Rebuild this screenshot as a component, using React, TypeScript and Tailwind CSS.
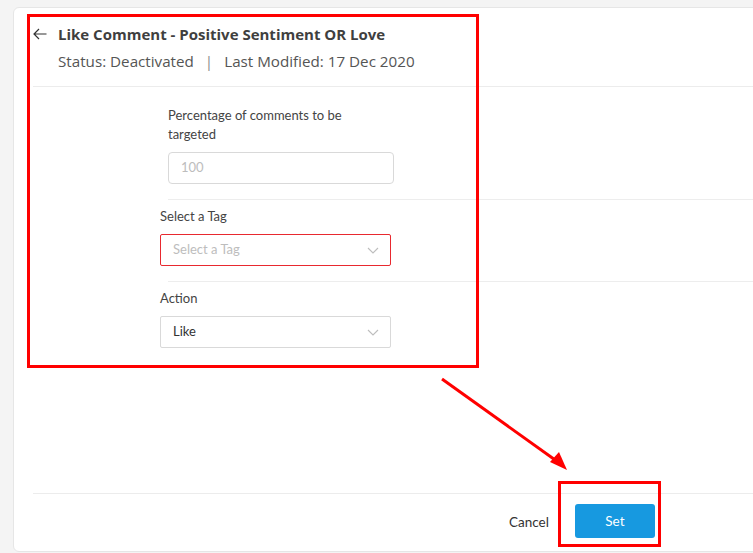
import { ReactNode } from "react";

function Chevron() {
  return (
    <svg width="12" height="7" viewBox="0 0 12 7" fill="none" className="shrink-0">
      <path d="M1 1l5 5 5-5" stroke="#bdbdbd" strokeWidth="1.1" />
    </svg>
  );
}

function Select({ value, placeholder, error }: { value?: string; placeholder: string; error?: boolean }) {
  return (
    <div
      className={`flex h-[32px] w-[231px] items-center justify-between rounded-[2px] border pl-[12px] pr-[11px] text-[13px] ${
        error ? "border-[#e8292f]" : "border-[#d9d9d9]"
      }`}
    >
      <span className={value ? "text-[#333]" : "text-[#bdbdbd]"}>{value ?? placeholder}</span>
      <Chevron />
    </div>
  );
}

function Section({ children, className }: { children: ReactNode; className?: string }) {
  return <div className={className}>{children}</div>;
}

export default function App() {
  return (
    <div
      className="relative h-[553px] w-full overflow-hidden bg-[#f4f4f4] pl-[13px] pt-[7px]"
      style={{ fontFamily: "Lato, 'Open Sans', sans-serif" }}
    >
      <div className="flex h-[545px] w-[800px] flex-col rounded-[6px] border border-[#e6e6e6] bg-white">
        {/* header */}
        <div className="ml-[19px] border-b border-[#ececec] pt-[16px] pb-[15px] font-['Open_Sans',sans-serif]">
          <div className="flex items-center gap-[11px]">
            <svg width="14" height="12" viewBox="0 0 14 12" fill="none">
              <path d="M13.5 6H1M6 1L1 6l5 5" stroke="#333" strokeWidth="1.2" />
            </svg>
            <h1 className="text-[15px] leading-[20px] font-bold text-[#3f3f3f]">
              Like Comment - Positive Sentiment OR Love
            </h1>
          </div>
          <p className="mt-[7px] pl-[25px] text-[15.2px] leading-[20px] text-[#555]">
            Status: Deactivated
            <span className="mx-[11px] text-[#888]">|</span>
            Last Modified: 17 Dec 2020
          </p>
        </div>

        {/* form */}
        <Section className="ml-[154px] border-b border-[#ededed] pt-[19px] pb-[15px]">
          <label className="block w-[190px] text-[13px] leading-[19px] text-[#444]">
            Percentage of comments to be targeted
          </label>
          <div className="mt-[8px] flex h-[32px] w-[226px] items-center rounded-[4px] border border-[#d9d9d9] pl-[12px] text-[13px] text-[#bdbdbd]">
            100
          </div>
        </Section>

        <Section className="ml-[154px] border-b border-[#ededed] pt-[7px] pb-[15px]">
          <div className="-ml-[8px]">
            <label className="block text-[13px] leading-[19px] text-[#444]">Select a Tag</label>
            <div className="mt-[8px]">
              <Select placeholder="Select a Tag" error />
            </div>
          </div>
        </Section>

        <Section className="pt-[7px] pl-[146px]">
          <label className="block text-[13px] leading-[19px] text-[#444]">Action</label>
          <div className="mt-[8px]">
            <Select value="Like" placeholder="Select" />
          </div>
        </Section>

        <div className="flex-1" />

        {/* footer */}
        <div className="ml-[19px] flex h-[58px] items-start border-t border-[#ececec] pt-[10px] pl-[476px]">
          <button className="mt-[8px] text-[13.5px] text-[#333]">Cancel</button>
          <button className="ml-[26px] h-[34px] w-[80px] rounded-[3px] bg-[#1799e0] text-[13.5px] text-white">
            Set
          </button>
        </div>
      </div>

      {/* annotations */}
      <div className="pointer-events-none absolute left-[27px] top-[14px] h-[354px] w-[452px] border-[3px] border-[#ff0000]" />
      <div className="pointer-events-none absolute left-[558px] top-[481px] h-[66px] w-[103px] border-[3px] border-[#ff0000]" />
      <svg className="pointer-events-none absolute left-0 top-0" width="753" height="553">
        <line x1="442" y1="379" x2="558" y2="462" stroke="#ff0000" strokeWidth="3" />
        <polygon points="567,470 550,462 559,452" fill="#ff0000" />
      </svg>
    </div>
  );
}
